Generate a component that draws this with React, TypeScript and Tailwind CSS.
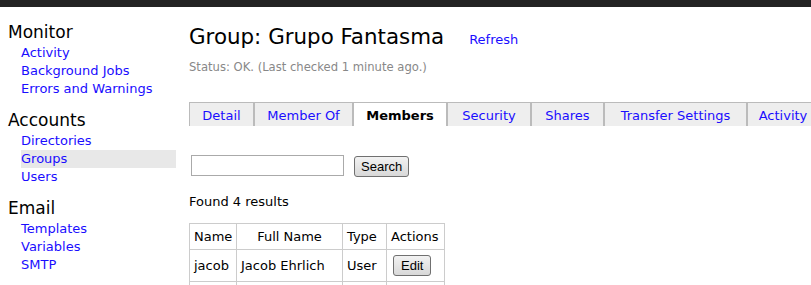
export default function App() {
  const sections = [
    { title: "Monitor", links: ["Activity", "Background Jobs", "Errors and Warnings"] },
    { title: "Accounts", links: ["Directories", "Groups", "Users"] },
    { title: "Email", links: ["Templates", "Variables", "SMTP"] },
  ];
  const tabs = [
    { label: "Detail", w: "w-[65px]" },
    { label: "Member Of", w: "w-[99px]" },
    { label: "Members", w: "w-[94px]" },
    { label: "Security", w: "w-[84px]" },
    { label: "Shares", w: "w-[73px]" },
    { label: "Transfer Settings", w: "w-[143px]" },
    { label: "Activity", w: "w-[72px]" },
  ];

  return (
    <div className="w-[811px] h-[285px] overflow-hidden bg-white font-['DejaVu_Sans',Verdana,sans-serif]">
      <div className="h-[7px] bg-[#232323]" />
      <div className="flex">
        {/* sidebar */}
        <div className="w-[176px] shrink-0 pt-[15px]">
          {sections.map((s, i) => (
            <div key={s.title} className={i > 0 ? "mt-[12px]" : ""}>
              <div className="pl-[8px] text-[17px] leading-[21px] text-black">{s.title}</div>
              <div className="mt-[1px]">
                {s.links.map((l) => (
                  <div
                    key={l}
                    className={`ml-[21px] text-[13px] leading-[18px] text-[#1a0dff] ${l === "Groups" ? "bg-[#e8e8e8]" : ""}`}
                  >
                    {l}
                  </div>
                ))}
              </div>
            </div>
          ))}
        </div>

        {/* main */}
        <div className="ml-[13px] flex-1 min-w-0 pt-[17px]">
          <div className="flex items-baseline">
            <h1 className="text-[21.4px] leading-[26px] text-black">Group: Grupo Fantasma</h1>
            <a className="ml-[25px] text-[13px] text-[#1a0dff]">Refresh</a>
          </div>
          <div className="mt-[10px] text-[11.6px] leading-[14px] text-[#888]">
            Status: OK. (Last checked 1 minute ago.)
          </div>

          <div className="mt-[28px] flex whitespace-nowrap">
            {tabs.map((t) => {
              const active = t.label === "Members";
              return (
                <div
                  key={t.label}
                  className={`${t.w} shrink-0 h-[24px] pt-[3px] border border-b-0 border-[#bbb] text-center text-[13px] leading-[20px] ${
                    active ? "bg-white text-black font-bold" : "bg-[#eeeeee] text-[#1a0dff]"
                  }`}
                >
                  {t.label}
                </div>
              );
            })}
          </div>

          <div className="mt-[29px] flex items-start">
            <input className="ml-[2px] w-[153px] h-[21px] border border-[#aaa] bg-white" />
            <button className="ml-[10px] mt-[1px] h-[21px] px-[6px] rounded-[3px] border border-[#707070] bg-gradient-to-b from-[#f2f2f2] to-[#d8d8d8] font-['Liberation_Sans',Arial,sans-serif] text-[13px] leading-[19px] text-black">
              Search
            </button>
          </div>

          <div className="mt-[17px] text-[13px] leading-[16px] text-black">Found 4 results</div>

          <table className="mt-[13px] w-[255px] table-fixed border-collapse text-[13px] text-black">
            <thead>
              <tr className="h-[26px]">
                <th className="w-[47px] border border-[#ccc] px-[4px] font-normal text-left">Name</th>
                <th className="w-[106px] border border-[#ccc] px-[4px] font-normal text-center">Full Name</th>
                <th className="w-[44px] border border-[#ccc] px-[4px] font-normal text-left">Type</th>
                <th className="w-[58px] border border-[#ccc] px-[4px] font-normal text-left">Actions</th>
              </tr>
            </thead>
            <tbody>
              <tr className="h-[32px]">
                <td className="border border-[#ccc] px-[4px]">jacob</td>
                <td className="border border-[#ccc] px-[4px]">Jacob Ehrlich</td>
                <td className="border border-[#ccc] px-[4px]">User</td>
                <td className="border border-[#ccc] px-[4px]">
                  <button className="ml-[2px] h-[21px] px-[7px] rounded-[3px] border border-[#707070] bg-gradient-to-b from-[#f2f2f2] to-[#d8d8d8] font-['Liberation_Sans',Arial,sans-serif] text-[13px] leading-[19px] text-black">
                    Edit
                  </button>
                </td>
              </tr>
              <tr className="h-[32px]">
                <td className="border border-[#ccc] px-[4px]">&nbsp;</td>
                <td className="border border-[#ccc] px-[4px]"></td>
                <td className="border border-[#ccc] px-[4px]"></td>
                <td className="border border-[#ccc] px-[4px]"></td>
              </tr>
            </tbody>
          </table>
        </div>
      </div>
    </div>
  );
}
